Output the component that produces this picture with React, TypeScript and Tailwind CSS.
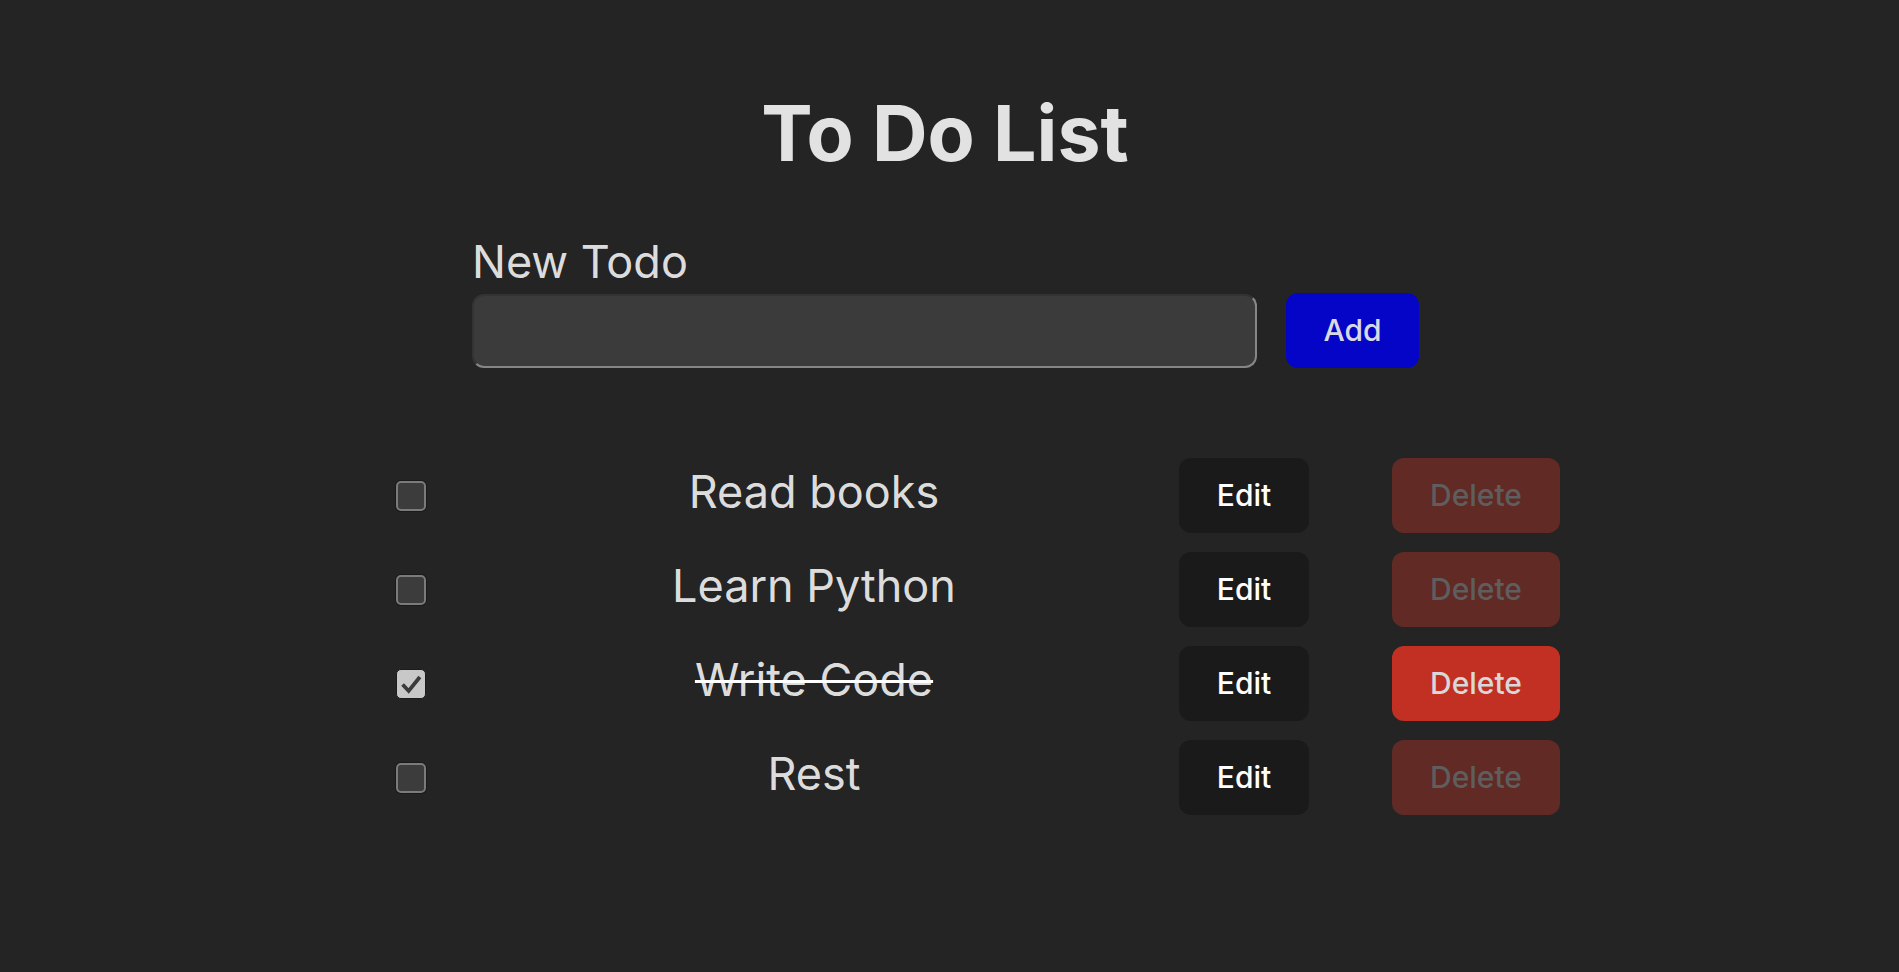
import { useState } from "react";

type Todo = { id: number; text: string; done: boolean };

const initialTodos: Todo[] = [
  { id: 1, text: "Read books", done: false },
  { id: 2, text: "Learn Python", done: false },
  { id: 3, text: "Write Code", done: true },
  { id: 4, text: "Rest", done: false },
];

function Checkbox({ checked, onChange }: { checked: boolean; onChange: () => void }) {
  return (
    <button
      onClick={onChange}
      className={`w-[30px] h-[30px] shrink-0 rounded-[5px] flex items-center justify-center ${
        checked
          ? "bg-[#c8c8c8] border border-[#1c1c1c]"
          : "bg-[#3c3c3c] border-2 border-[#7b7b7b] shadow-[0_0_0_1px_#1a1a1a]"
      }`}
    >
      {checked && (
        <svg width="30" height="30" viewBox="0 0 30 30">
          <path d="M6 15.5 L12.5 22.5 L24.5 7.5" fill="none" stroke="#3a3a3a" strokeWidth="4" />
        </svg>
      )}
    </button>
  );
}

export default function App() {
  const [todos, setTodos] = useState<Todo[]>(initialTodos);
  const [text, setText] = useState("");

  const toggle = (id: number) =>
    setTodos(todos.map((t) => (t.id === id ? { ...t, done: !t.done } : t)));

  const add = () => {
    if (!text.trim()) return;
    setTodos([...todos, { id: Date.now(), text, done: false }]);
    setText("");
  };

  return (
    <div className="min-h-screen w-full bg-[#242424] text-[rgba(255,255,255,0.87)] font-['Inter',sans-serif] pt-[91px]">
      <h1 className="text-center text-[77px] leading-[85px] font-bold pr-[9px]">To Do List</h1>

      <div className="mx-auto w-[955px] pr-[8px] mt-[59px]">
        <label className="block text-[45px] leading-[54px] font-normal">New Todo</label>
        <div className="flex items-center mt-[4px]">
          <input
            value={text}
            onChange={(e) => setText(e.target.value)}
            className="w-[785px] h-[74px] rounded-[12px] bg-[#3b3b3b] border-2 border-t-[#333333] border-l-[#333333] border-b-[#868686] border-r-[#868686] outline-none px-4 text-[30px]"
          />
          <button
            onClick={add}
            className="ml-[29px] w-[133px] h-[75px] rounded-[12px] bg-[#0505c8] text-[#d9d9e4] text-[30px] font-medium"
          >
            Add
          </button>
        </div>
      </div>

      <div className="mx-auto w-[1221px] pl-[57px] mt-[90px] flex flex-col gap-[19px]">
        {todos.map((t) => (
          <div key={t.id} className="flex items-center h-[75px]">
            <Checkbox checked={t.done} onChange={() => toggle(t.id)} />
            <span
              className={`ml-[23px] w-[730px] text-center text-[45px] leading-[54px] mb-[8px] ${
                t.done ? "line-through decoration-white decoration-[3px]" : ""
              }`}
            >
              {t.text}
            </span>
            <button className="w-[130px] h-[75px] rounded-[12px] bg-[#1a1a1a] text-white text-[30px] font-medium">
              Edit
            </button>
            <button
              disabled={!t.done}
              className={`ml-[83px] w-[168px] h-[75px] rounded-[12px] text-[30px] font-medium ${
                t.done ? "bg-[#c23024] text-[#d8d8d8]" : "bg-[#612a25] text-[#5e5e5e]"
              }`}
            >
              Delete
            </button>
          </div>
        ))}
      </div>
    </div>
  );
}
